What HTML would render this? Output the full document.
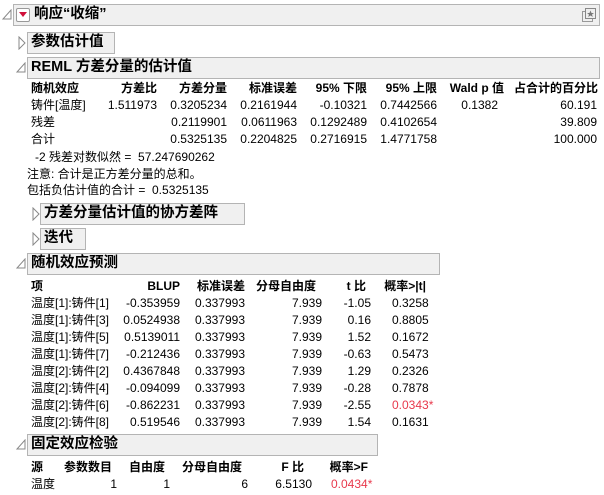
<!DOCTYPE html>
<html><head><meta charset="utf-8"><style>
body{margin:0;width:604px;height:495px;background:#fff;position:relative;overflow:hidden;font-family:"Liberation Sans","Noto Sans CJK SC",sans-serif;font-size:12px;color:#000}
.a{position:absolute;white-space:nowrap;line-height:16px}
.r{position:absolute;white-space:nowrap;line-height:16px;text-align:right}
.b{font-weight:bold}
.bar{position:absolute;background:#f0f0f0;border:1px solid #b4b4b4;box-sizing:border-box;font-weight:bold;font-size:14.5px;line-height:19px;padding-left:3px}
.red{color:#e8394c}
</style></head><body>
<div class="bar" style="left:13px;top:4px;width:587px;height:22px;padding-left:20px">响应“收缩”</div>
<svg class="a" style="left:2px;top:9px" width="10" height="12"><path d="M9 1 L9 10 L1 10 Z" fill="none" stroke="#888" stroke-width="1"/></svg>
<div class="a" style="left:16px;top:8px;width:14px;height:14px;border:1px solid #999;border-radius:2px;box-sizing:border-box;background:#fff"></div>
<svg class="a" style="left:18px;top:12px" width="10" height="6"><path d="M1 0 L9 0 L5 5 Z" fill="#d0103a"/></svg>
<svg class="a" style="left:581px;top:7px" width="16" height="16"><rect x="1.5" y="4.5" width="10" height="10" fill="none" stroke="#999"/><rect x="4.5" y="1.5" width="10" height="10" fill="#eee" stroke="#888"/><path d="M9.5 3.5 L10.5 6 L13 6 L11 7.5 L11.8 10 L9.5 8.5 L7.2 10 L8 7.5 L6 6 L8.5 6 Z" fill="#777"/></svg>

<svg class="a" style="left:18px;top:36px" width="8" height="14"><path d="M1 1 L7 7 L1 13 Z" fill="none" stroke="#888"/></svg>
<div class="bar" style="left:27px;top:32px;width:88px;height:22px">参数估计值</div>

<svg class="a" style="left:16px;top:62px" width="10" height="12"><path d="M9 1 L9 10 L1 10 Z" fill="none" stroke="#888"/></svg>
<div class="bar" style="left:27px;top:57px;width:573px;height:22px">REML 方差分量的估计值</div>

<div class="a b" style="left:31px;top:80px">随机效应</div>
<div class="r b" style="right:447px;top:80px">方差比</div>
<div class="r b" style="right:377px;top:80px">方差分量</div>
<div class="r b" style="right:307px;top:80px">标准误差</div>
<div class="r b" style="right:237px;top:80px">95% 下限</div>
<div class="r b" style="right:167px;top:80px">95% 上限</div>
<div class="r b" style="right:100px;top:80px">Wald p 值</div>
<div class="r b" style="right:6px;top:80px">占合计的百分比</div>

<div class="a" style="left:31px;top:97px">铸件[温度]</div>
<div class="r" style="right:447px;top:97px">1.511973</div>
<div class="r" style="right:377px;top:97px">0.3205234</div>
<div class="r" style="right:307px;top:97px">0.2161944</div>
<div class="r" style="right:237px;top:97px">-0.10321</div>
<div class="r" style="right:167px;top:97px">0.7442566</div>
<div class="r" style="right:106px;top:97px">0.1382</div>
<div class="r" style="right:7px;top:97px">60.191</div>

<div class="a" style="left:31px;top:114px">残差</div>
<div class="r" style="right:377px;top:114px">0.2119901</div>
<div class="r" style="right:307px;top:114px">0.0611963</div>
<div class="r" style="right:237px;top:114px">0.1292489</div>
<div class="r" style="right:167px;top:114px">0.4102654</div>
<div class="r" style="right:7px;top:114px">39.809</div>

<div class="a" style="left:31px;top:131px">合计</div>
<div class="r" style="right:377px;top:131px">0.5325135</div>
<div class="r" style="right:307px;top:131px">0.2204825</div>
<div class="r" style="right:237px;top:131px">0.2716915</div>
<div class="r" style="right:167px;top:131px">1.4771758</div>
<div class="r" style="right:7px;top:131px">100.000</div>

<div class="a" style="left:35px;top:149px">-2 残差对数似然 =&nbsp; 57.247690262</div>
<div class="a" style="left:27px;top:166px">注意: 合计是正方差分量的总和。</div>
<div class="a" style="left:27px;top:182px">包括负估计值的合计 =&nbsp; 0.5325135</div>

<svg class="a" style="left:32px;top:207px" width="8" height="14"><path d="M1 1 L7 7 L1 13 Z" fill="none" stroke="#888"/></svg>
<div class="bar" style="left:40px;top:203px;width:205px;height:22px">方差分量估计值的协方差阵</div>
<svg class="a" style="left:32px;top:232px" width="8" height="14"><path d="M1 1 L7 7 L1 13 Z" fill="none" stroke="#888"/></svg>
<div class="bar" style="left:40px;top:228px;width:46px;height:22px">迭代</div>

<svg class="a" style="left:16px;top:258px" width="10" height="12"><path d="M9 1 L9 10 L1 10 Z" fill="none" stroke="#888"/></svg>
<div class="bar" style="left:27px;top:253px;width:413px;height:22px">随机效应预测</div>

<div class="a b" style="left:31px;top:278px">项</div>
<div class="r b" style="right:424px;top:278px">BLUP</div>
<div class="r b" style="right:359px;top:278px">标准误差</div>
<div class="r b" style="right:288px;top:278px">分母自由度</div>
<div class="r b" style="right:238px;top:278px">t 比</div>
<div class="r b" style="right:178px;top:278px">概率&gt;|t|</div>

<div class="a" style="left:31px;top:295px;line-height:17px">温度[1]:铸件[1]<br>温度[1]:铸件[3]<br>温度[1]:铸件[5]<br>温度[1]:铸件[7]<br>温度[2]:铸件[2]<br>温度[2]:铸件[4]<br>温度[2]:铸件[6]<br>温度[2]:铸件[8]</div>
<div class="r" style="right:424px;top:295px;line-height:17px">-0.353959<br>0.0524938<br>0.5139011<br>-0.212436<br>0.4367848<br>-0.094099<br>-0.862231<br>0.519546</div>
<div class="r" style="right:359px;top:295px;line-height:17px">0.337993<br>0.337993<br>0.337993<br>0.337993<br>0.337993<br>0.337993<br>0.337993<br>0.337993</div>
<div class="r" style="right:282px;top:295px;line-height:17px">7.939<br>7.939<br>7.939<br>7.939<br>7.939<br>7.939<br>7.939<br>7.939</div>
<div class="r" style="right:233px;top:295px;line-height:17px">-1.05<br>0.16<br>1.52<br>-0.63<br>1.29<br>-0.28<br>-2.55<br>1.54</div>
<div class="a" style="left:392px;top:295px;line-height:17px">0.3258<br>0.8805<br>0.1672<br>0.5473<br>0.2326<br>0.7878<br><span class="red">0.0343*</span><br>0.1631</div>

<svg class="a" style="left:16px;top:439px" width="10" height="12"><path d="M9 1 L9 10 L1 10 Z" fill="none" stroke="#888"/></svg>
<div class="bar" style="left:27px;top:434px;width:351px;height:22px">固定效应检验</div>

<div class="a b" style="left:31px;top:459px">源</div>
<div class="r b" style="right:492px;top:459px">参数数目</div>
<div class="r b" style="right:439px;top:459px">自由度</div>
<div class="r b" style="right:362px;top:459px">分母自由度</div>
<div class="r b" style="right:300px;top:459px">F 比</div>
<div class="r b" style="right:236px;top:459px">概率&gt;F</div>
<div class="a" style="left:31px;top:476px">温度</div>
<div class="r" style="right:487px;top:476px">1</div>
<div class="r" style="right:434px;top:476px">1</div>
<div class="r" style="right:356px;top:476px">6</div>
<div class="r" style="right:292px;top:476px">6.5130</div>
<div class="a red" style="left:331px;top:476px">0.0434*</div>
</body></html>
